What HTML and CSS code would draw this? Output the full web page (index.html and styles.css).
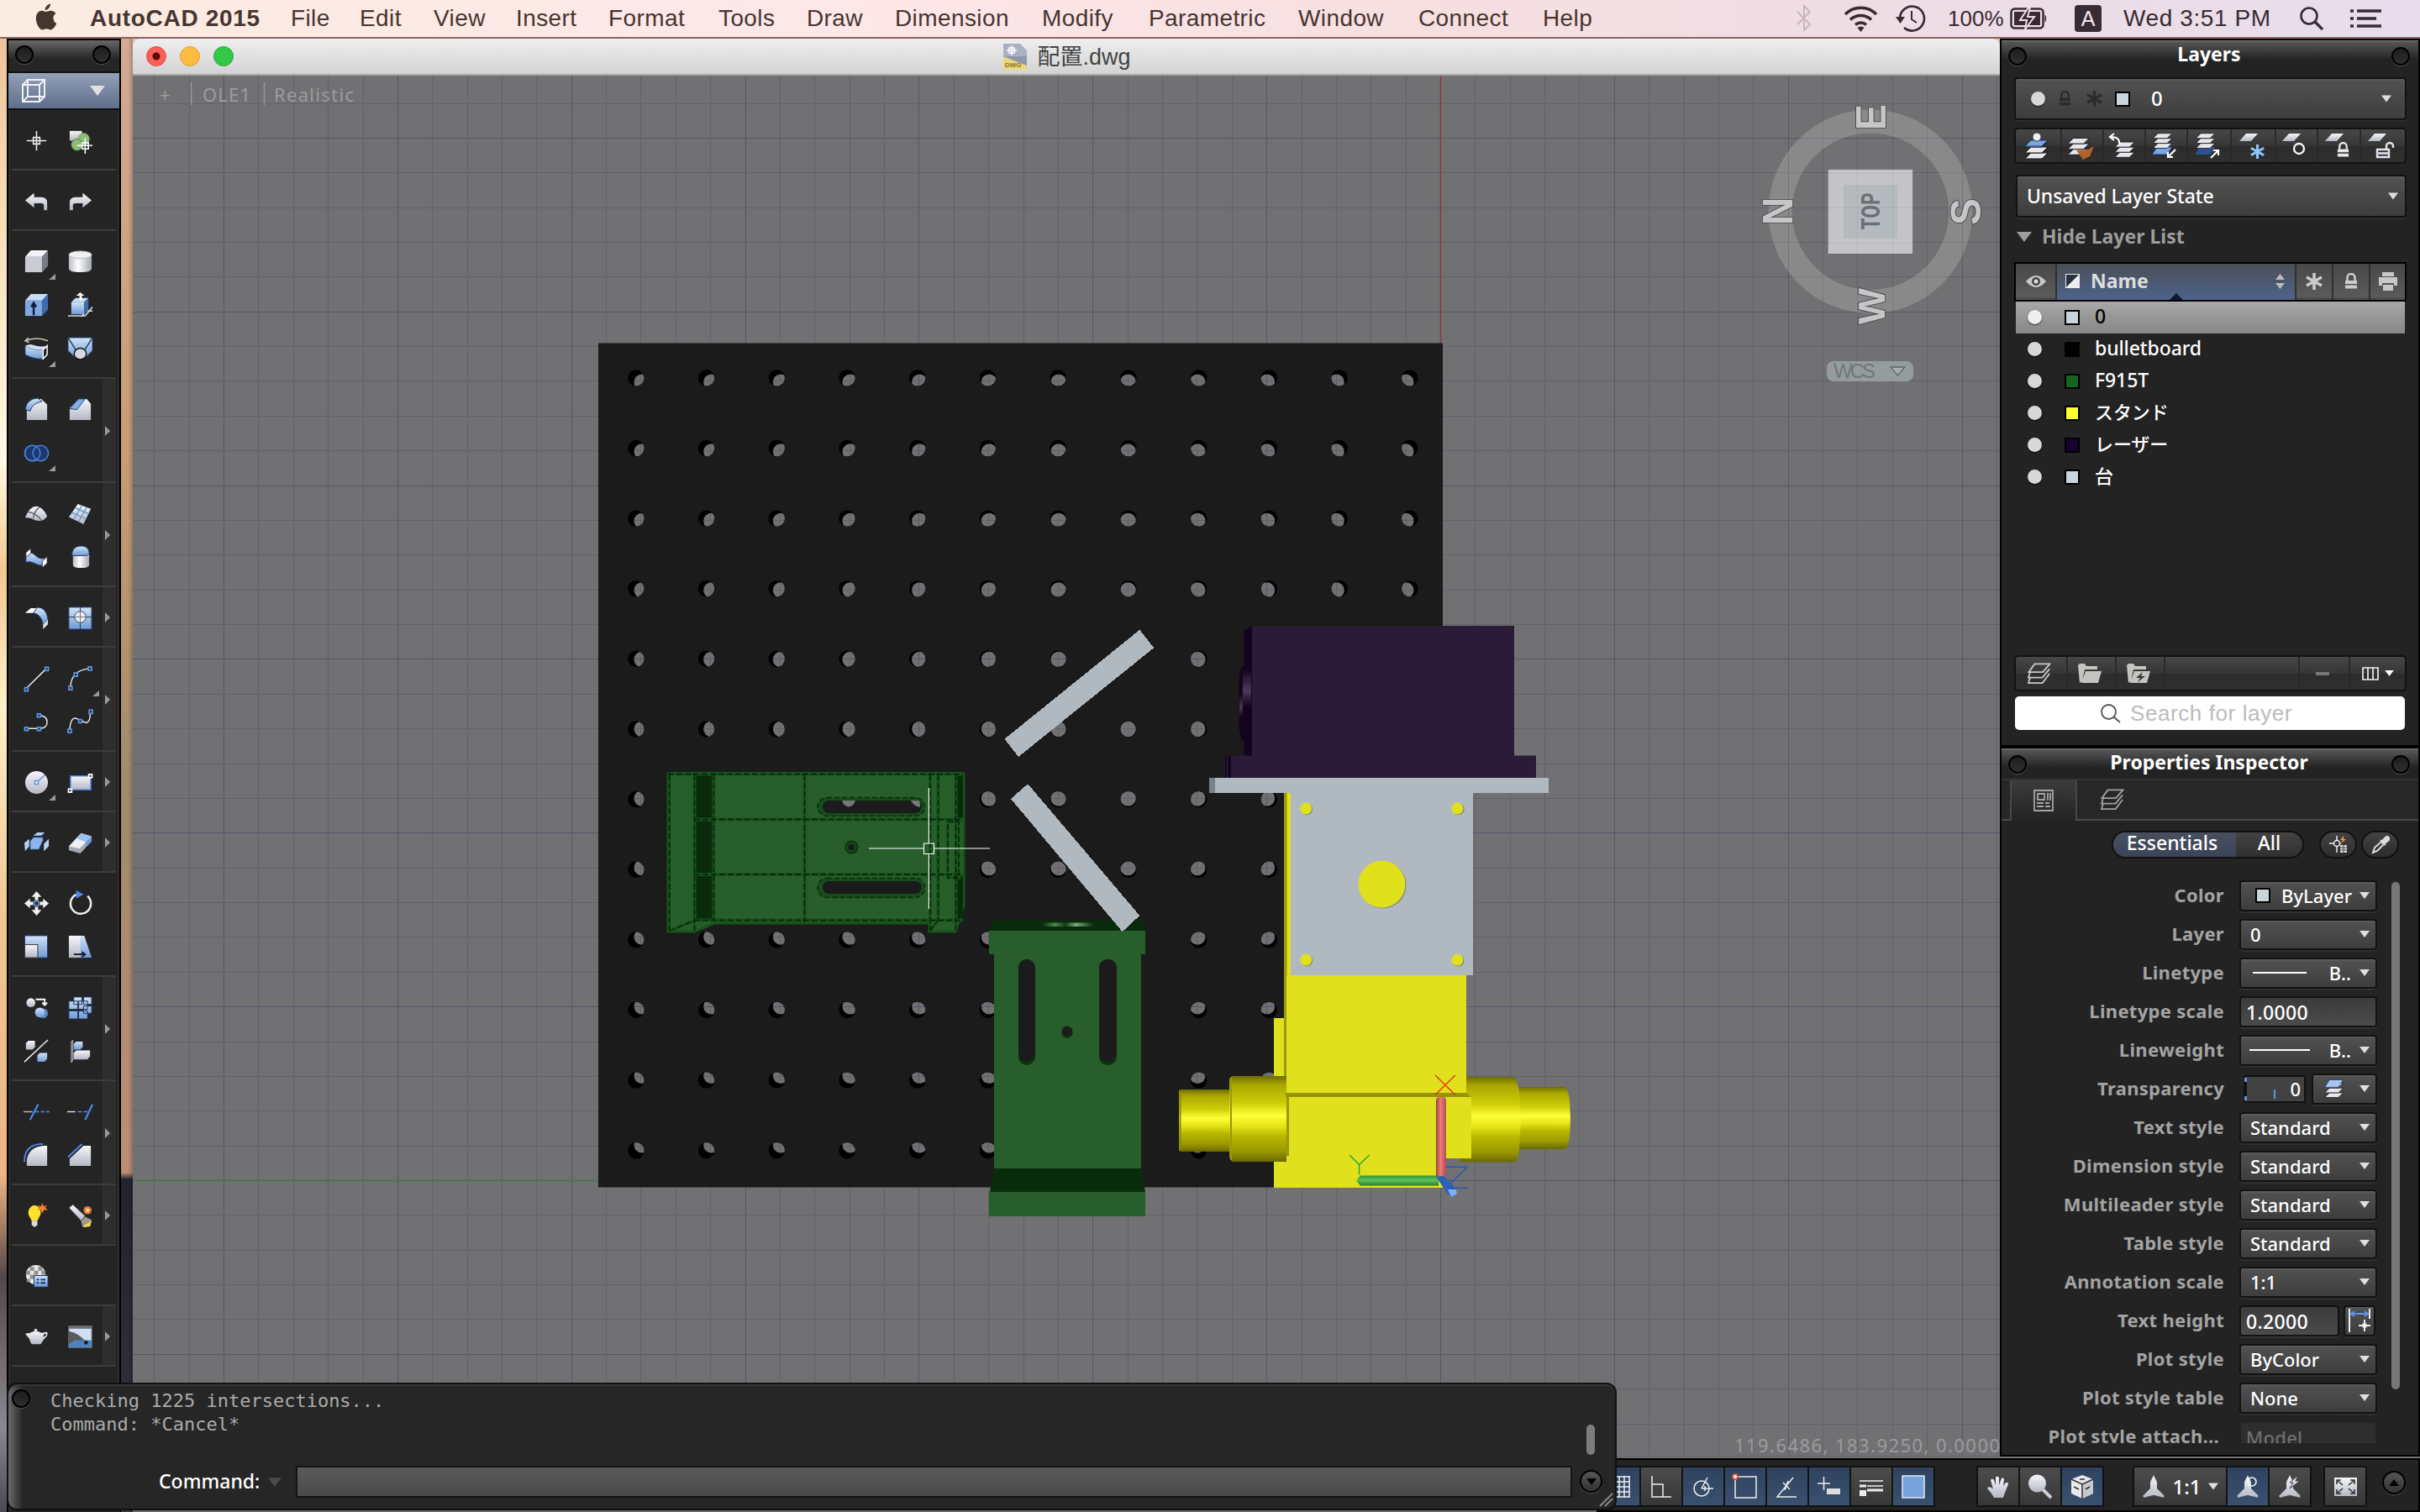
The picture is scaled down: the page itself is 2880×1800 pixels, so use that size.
FILE: index.html
```html
<!DOCTYPE html>
<html lang="en">
<head>
<meta charset="utf-8">
<title>AutoCAD 2015</title>
<link rel="stylesheet" href="styles.css">
</head>
<body>
<svg class="defs" width="0" height="0">
  <defs>
    <linearGradient id="gW" x1="0" y1="0" x2="0" y2="1"><stop offset="0" stop-color="#f6f7fa"/><stop offset="1" stop-color="#b4b8c4"/></linearGradient>
    <linearGradient id="gH" x1="0" y1="0" x2="1" y2="0"><stop offset="0" stop-color="#b9bcc4"/><stop offset=".4" stop-color="#fff"/><stop offset="1" stop-color="#a4a8b2"/></linearGradient>
    <linearGradient id="gB" x1="0" y1="0" x2="0" y2="1"><stop offset="0" stop-color="#d3e4f8"/><stop offset="1" stop-color="#6d9bd6"/></linearGradient>
    <linearGradient id="gC" x1="0" y1="0" x2="0" y2="1"><stop offset="0" stop-color="#6e6c00"/><stop offset=".1" stop-color="#a8a600"/><stop offset=".32" stop-color="#d0ce08"/><stop offset=".46" stop-color="#ffff38"/><stop offset=".58" stop-color="#e8e618"/><stop offset=".7" stop-color="#bbb900"/><stop offset=".88" stop-color="#9a9800"/><stop offset="1" stop-color="#6a6800"/></linearGradient>
    <linearGradient id="gK" x1="0" y1="0" x2="0" y2="1"><stop offset="0" stop-color="#140320"/><stop offset=".4" stop-color="#4b3959"/><stop offset=".7" stop-color="#140320"/></linearGradient>
    <linearGradient id="gR" x1="0" y1="0" x2="1" y2="0"><stop offset="0" stop-color="#9c4040"/><stop offset=".45" stop-color="#f07c7c"/><stop offset="1" stop-color="#b04c4c"/></linearGradient>
    <linearGradient id="gG" x1="0" y1="0" x2="0" y2="1"><stop offset="0" stop-color="#2f8f34"/><stop offset=".45" stop-color="#5cc45c"/><stop offset="1" stop-color="#2c7c2e"/></linearGradient>
    <linearGradient id="gS" x1="0" y1="0" x2="1" y2="0"><stop offset="0" stop-color="#082a0a"/><stop offset=".25" stop-color="#4f8752"/><stop offset=".45" stop-color="#123d15"/><stop offset=".65" stop-color="#7aa87c"/><stop offset="1" stop-color="#082a0a"/></linearGradient>
    <symbol id="tri" viewBox="0 0 12 8"><path d="M0 0H12L6 8Z" fill="currentColor"/></symbol>
    <symbol id="lock" viewBox="0 0 16 20"><path d="M3.500 9V5.500a4.500 4.500 0 0 1 9 0V9" fill="none" stroke="currentColor" stroke-width="2.500"/><path d="M1 9H15V13H1ZM1 14.500H15V18.500H1Z" fill="currentColor"/></symbol>
    <symbol id="star" viewBox="0 0 20 20"><path d="M10 0V20M1 5L19 15M1 15L19 5" stroke="currentColor" stroke-width="3.600"/></symbol>
    <symbol id="sheet" viewBox="0 0 24 12"><path d="M9 1H23L15 10H1Z" fill="url(#gW)"/></symbol>
    <symbol id="stack" viewBox="0 0 30 32"><path d="M8 22H28L21 29H1Z" fill="#e6e8ee" stroke="#1a1a1a"/><path d="M8 15H28L21 22H1Z" fill="#e6e8ee" stroke="#1a1a1a"/><path d="M8 8H28L21 15H1Z" fill="#e6e8ee" stroke="#1a1a1a"/></symbol>
    <symbol id="ostack" viewBox="0 0 30 28"><path d="M3 19L1 26H19L28 14M3 13L1 19H19L28 8" fill="none" stroke="currentColor" stroke-width="2"/><path d="M9 1.500H28.500L19.500 12H1.500Z" fill="none" stroke="currentColor" stroke-width="2"/></symbol>
    <symbol id="scale" viewBox="0 0 28 28"><path d="M14 0C15 3 18 7 18 9V16L27 25 25 27C21 25 17 25 14 24 11 25 7 25 3 27L1 25 10 16V9C10 7 13 3 14 0Z" fill="url(#gW)"/></symbol>
  </defs>
</svg>

<header class="menubar">
  <svg class="apple" viewBox="0 0 26 32"><path d="M18 0C18 4 15 7.500 11.500 7.500 11.500 4 14.500.5 18 0ZM21.500 17C21.500 13.500 24 11.800 24.500 11.500 22.500 8.600 19.500 8.300 18.500 8.300 16 8.100 14.500 9.600 13 9.600 11.500 9.600 10 8.300 7.700 8.300 4.500 8.400.8 11 .8 17.500.8 23.500 5 31 8.500 31 10.300 31 11 29.800 13.300 29.800 15.700 29.800 16.300 31 18.200 31 21.500 31 24.500 25.500 25.200 23.300 23.500 22.600 21.500 20.500 21.500 17Z" fill="#47352f"/></svg>
  <nav class="menus"><b>AutoCAD 2015</b><span>File</span><span>Edit</span><span>View</span><span>Insert</span><span>Format</span><span>Tools</span><span>Draw</span><span>Dimension</span><span>Modify</span><span>Parametric</span><span>Window</span><span>Connect</span><span>Help</span></nav>
  <div class="tray">
    <svg width="20" height="34" viewBox="0 0 20 34"><path d="M2 9L17 24 10 31V2L17 9 2 24" fill="none" stroke="#c9b6bd" stroke-width="2"/></svg>
    <svg class="m37" width="41" height="32" viewBox="0 0 41 32"><g fill="none" stroke="#3a2a32" stroke-width="3.600"><path d="M2 11A26 26 0 0 1 39 11"/><path d="M8 17.500A18 18 0 0 1 33 17.500"/><path d="M14 23.500A9.500 9.500 0 0 1 27 23.500"/></g><path d="M16.500 27A6 6 0 0 1 24.500 27L20.500 32Z" fill="#3a2a32"/></svg>
    <svg class="m21" width="36" height="34" viewBox="0 0 36 34"><path d="M5 17A14.500 14.500 0 1 1 10 28" fill="none" stroke="#3a2a32" stroke-width="2.600"/><path d="M0 15H11L5.500 23Z" fill="#3a2a32"/><path d="M19 8V18L25 22" fill="none" stroke="#3a2a32" stroke-width="2"/></svg>
    <span class="m26 pct">100%</span>
    <svg class="m10" width="45" height="26" viewBox="0 0 45 26"><rect x="1.500" y="1.500" width="38" height="23" rx="4" fill="none" stroke="#3a2a32" stroke-width="2.500"/><rect x="5" y="5" width="31" height="16" fill="#3a2a32"/><path d="M41.500 8Q45 13 41.500 18Z" fill="#3a2a32"/><path d="M22 0L12 15H20L18 26 29 11H21L24 0Z" fill="#3a2a32" stroke="#eedde4" stroke-width="2"/></svg>
    <span class="m32 ime">A</span>
    <span class="m26 date">Wed 3:51 PM</span>
    <svg class="m34" width="30" height="30" viewBox="0 0 30 30"><circle cx="12" cy="12" r="9.500" fill="none" stroke="#3a2a32" stroke-width="2.600"/><path d="M19 19L28 28" stroke="#3a2a32" stroke-width="3.200"/></svg>
    <svg class="m31" width="37" height="22" viewBox="0 0 37 22"><path d="M0 2H4M8 2H37M0 11H4M8 11H31M0 20H4M8 20H37" stroke="#3a2a32" stroke-width="3.600"/></svg>
  </div>
</header>

<div class="rock"></div>

<main class="drawing">
  <div class="titlebar">
    <i class="light red"></i><i class="light amber"></i><i class="light green"></i>
    <div class="doc"><svg width="28" height="31" viewBox="0 0 28 31"><path d="M0 0H20L28 8V31H0Z" fill="#a9b2c3"/><path d="M0 15L28 26V31H0Z" fill="#ecd77c"/><path d="M0 15L28 15V26Z" fill="#8f98aa"/><path d="M4 8H16M10 2V14M7 5H13V11H7Z" stroke="#fff" fill="none" stroke-width="1.500"/><text x="2" y="28" font-size="8" font-family="Liberation Sans" font-weight="bold" fill="#857229">DWG</text></svg><span>配置.dwg</span></div>
  </div>
  <svg class="canvas" viewBox="158 90 2222 1643">
    <defs><clipPath id="holeTop"></clipPath><clipPath id="holeBottom"></clipPath></defs>
    <g id="floor"><rect x="158" y="90" width="2222" height="1643" fill="#717173"/><g id="grid" shape-rendering="crispEdges"></g></g>
    <path d="M158 1405.500H712" stroke="#3f7a45" stroke-width="1.500"/><path d="M1714.500 90V408" stroke="#8b3a3f" stroke-width="1.500"/>
    <rect x="712" y="408.500" width="1005" height="1005" fill="#1b1b1b"/>
    <g id="rims" fill="#000"></g>
    <g clip-path="url(#holeTop)"><g clip-path="url(#holeBottom)"><use href="#floor"/></g></g>

    <path d="M794.500 920.500L802 919H1146L1148 921V1080L1138 1110H1106V1099.500H850L827 1110H794.500Z" fill="#285e2b"/>
    <path d="M795 921H1147V1078L1137 1109H1106V1099H850L826 1109H795Z" fill="none" stroke="#17551b" stroke-width="3"/>
    <g fill="#082c0b"><path d="M828 922H848V974H828ZM828 976H848V1040H828ZM828 1042H848V1094H828ZM1138 922H1146V974H1138ZM1138 1042H1146V1094H1138Z"/></g>
    <path d="M795 921.500H1146M826 975.500H1146M826 1041H1146M826 1095.500H1146M796.500 922V1108M826.500 922V1108M849.500 922V1096M957.500 922V1098M1107 922V1108M1116.500 922V1096M1137.500 922V1108M1128 978H1141V1045H1128ZM797 1108L826 1096M1107 1108L1116 1096" fill="none" stroke="#17551b" stroke-width="4"/>
    <path d="M795 921.500H1146M826 975.500H1146M826 1041H1146M826 1095.500H1146M796.500 922V1108M826.500 922V1108M849.500 922V1096M957.500 922V1098M1107 922V1108M1116.500 922V1096M1137.500 922V1108M1128 978H1141V1045H1128ZM797 1108L826 1096M1107 1108L1116 1096" fill="none" stroke="#061f08" stroke-width="1.300" stroke-dasharray="7 3"/>
    <g fill="#164d1a" stroke="#082c0b" stroke-dasharray="6 3" stroke-width="1.400"><rect x="973" y="949.500" width="127.500" height="22" rx="11"/><rect x="973" y="1045.500" width="127.500" height="23" rx="11"/></g>
    <g fill="#1b1b1b"><rect x="979" y="953" width="118" height="15" rx="7.500"/><rect x="979" y="1049" width="118" height="15" rx="7.500"/></g>
    <path d="M1002 953H1018Q1016 960 1010 960.500 1004 960 1002 953ZM1084 953H1094Q1096 960 1094 961 1087 959 1084 953Z" fill="#78787a"/>
    <circle cx="1013.400" cy="1008.600" r="7" fill="#174f1a" stroke="#0c3a10" stroke-width="2.500"/><circle cx="1013.400" cy="1008.600" r="4" fill="#1b1b1b"/>

    <path d="M1183 1095.500H1359L1363 1108H1177Z" fill="#082c0b"/><rect x="1240" y="1098.500" width="62" height="4.500" rx="2" fill="url(#gS)"/>
    <path d="M1177 1108H1363V1136H1358V1391H1183V1136H1177Z" fill="#285e2b"/>
    <path d="M1183 1391H1358L1363 1419H1178Z" fill="#082c0b"/><rect x="1177" y="1419" width="186" height="29" fill="#285e2b"/>
    <g fill="#0b330e"><rect x="1212" y="1142" width="20" height="126" rx="10"/><rect x="1308" y="1142" width="21" height="126" rx="10"/><circle cx="1270" cy="1229" r="6.800"/></g>
    <g fill="#1b1b1b"><rect x="1212" y="1142" width="20" height="121" rx="10"/><rect x="1308" y="1142" width="21" height="121" rx="10"/><circle cx="1270" cy="1227.500" r="6"/></g>
    <g fill="#b1b9c0" shape-rendering="crispEdges"><path d="M1356.300 749.800L1373.200 771.200 1212 901 1195.500 879.700Z"/><path d="M1223.200 933.200L1356.300 1090 1335.700 1109.200 1203 951Z"/></g>

    <path d="M1480.500 751L1490 745V925H1480.500Z" fill="#130520"/><path d="M1474.500 805L1478 793H1490V882H1478L1474.500 868Z" fill="#130520"/><path d="M1479 797H1489V860H1479Z" fill="url(#gK)"/><path d="M1475 826H1479V866H1475Z" fill="url(#gK)"/>
    <path d="M1490 745H1802V899.500H1828V926H1457.500V899.500H1490Z" fill="#2a1b36"/><path d="M1458 899.500H1465V926H1458Z" fill="#130520"/><path d="M1460.500 900V926" stroke="#3b2a48"/>
    <rect x="1528" y="944" width="8" height="218" fill="#e0e01c"/><rect x="1528" y="944" width="3.500" height="363" fill="#99980c"/>
    <rect x="1516" y="1212" width="12" height="70" fill="#e0e01c"/>
    <path d="M1516 1370H1717V1414H1516Z" fill="#e0e01c"/>
    <path d="M1403 1300Q1403 1297 1406 1297H1466V1371H1406Q1403 1371 1403 1366Z" fill="url(#gC)"/><path d="M1404.500 1298V1370" stroke="#8a8800" stroke-width="2"/>
    <path d="M1463 1284L1466 1281H1531V1383H1466L1463 1378Z" fill="url(#gC)"/><path d="M1465 1283V1381" stroke="#9a9810" stroke-width="2"/>
    <path d="M1808 1294H1862Q1866 1297 1868 1310L1869 1332 1868 1354Q1866 1366 1862 1368H1808Z" fill="url(#gC)"/>
    <path d="M1738 1282H1801Q1806 1286 1808 1300L1810 1333 1808 1370Q1806 1382 1802 1383.500H1738Z" fill="url(#gC)"/>
    <rect x="1531" y="1161" width="214" height="140" fill="#e0e01c"/>
    <path d="M1530 1301H1745L1751 1306H1530Z" fill="#969409"/>
    <path d="M1531 1306H1751V1379H1717V1395H1534V1376L1531 1374Z" fill="#e0e01c"/><path d="M1532.500 1306V1376" stroke="#99980c" stroke-width="3"/>
    <path d="M1439 926H1843V944H1439Z" fill="#b1b9c0"/><path d="M1439 926H1446V944H1439Z" fill="#79828a"/><rect x="1536" y="944" width="217" height="217" fill="#b1b9c0"/>
    <g fill="#77808a"><circle cx="1645.500" cy="1053.500" r="28"/><circle cx="1555" cy="963.300" r="7"/><circle cx="1735.500" cy="963.300" r="7"/><circle cx="1555" cy="1143.500" r="7"/><circle cx="1735.500" cy="1143.500" r="7"/></g>
    <g fill="#e0e01c"><circle cx="1644.500" cy="1052.700" r="28"/><circle cx="1554.200" cy="962.600" r="7"/><circle cx="1734.500" cy="962.600" r="7"/><circle cx="1554.200" cy="1142.800" r="7"/><circle cx="1734.500" cy="1142.800" r="7"/></g>

    <path d="M1709 1311Q1709 1306 1713 1306H1717Q1721 1306 1721 1311V1404H1709Z" fill="url(#gR)"/>
    <path d="M1614 1405.500L1619 1399.500H1712V1411.500H1619Z" fill="url(#gG)"/>
    <path d="M1709 1401L1718 1399.500 1733 1415 1734 1421 1727 1425 1722 1420Z" fill="#2b62b4"/><path d="M1723 1416L1733 1416 1734 1421 1727 1425Z" fill="#7fb0f0"/>
    <path d="M1708 1280L1732 1303.500M1732 1280L1708 1303.500" stroke="#e4341c" stroke-width="1.300"/>
    <path d="M1606 1375L1617.600 1386.500 1629.700 1375M1617.600 1386.500V1398.600" stroke="#22a83a" stroke-width="1.400" fill="none"/>
    <path d="M1721 1389.300H1746.700L1726 1409M1732 1414.300H1746.700" stroke="#2857b8" stroke-width="1.400" fill="none"/>
    <path d="M1034 1010H1099M1111.500 1010H1178M1105.400 938V1003.500M1105.400 1016.500V1082M1099.500 1004H1111.500V1016.500H1099.500Z" stroke="#fff" stroke-width="1.100" fill="none"/>

    <circle cx="2226" cy="251.700" r="107.300" fill="none" stroke="#fff" stroke-opacity=".17" stroke-width="28"/>
    <g class="compass"><text transform="translate(2243.500 139.500) rotate(-90)" textLength="31" lengthAdjust="spacingAndGlyphs">E</text><text transform="translate(2132.500 251.500) rotate(-90)" textLength="33" lengthAdjust="spacingAndGlyphs">N</text><text transform="translate(2356.500 252) rotate(-90)" textLength="32" lengthAdjust="spacingAndGlyphs">S</text><text transform="translate(2242.500 364.500) rotate(-90)" textLength="43" lengthAdjust="spacingAndGlyphs" font-size="45">W</text></g>
    <rect x="2175.700" y="202" width="100.400" height="100" fill="#c4c4c6"/><rect x="2194" y="220" width="64" height="64" fill="#b4babe"/>
    <path d="M2210.500 202V302M2252.500 202V302M2176 206.500H2276M2176 247.500H2276M2176 289.500H2276" stroke="#000" stroke-opacity=".06"/>
    <text class="face" transform="translate(2237 251.500) rotate(-90)" textLength="44" lengthAdjust="spacingAndGlyphs">TOP</text>
    <rect x="2174" y="430" width="103" height="24" rx="8" fill="#959c9e"/><text class="wcs" x="2182" y="450" textLength="50">WCS</text><path d="M2250 437H2267L2258.500 447Z" fill="#a7b0b3" stroke="#5f6567" stroke-width="1.300"/>
    <g class="hud"><text x="190" y="121">+</text><text x="241" y="121" textLength="57">OLE1</text><text x="326" y="121" textLength="95">Realistic</text><text x="2064" y="1729" textLength="316">119.6486, 183.9250, 0.0000</text></g>
    <path d="M227.500 98V125M314.500 98V125" stroke="#97979a" stroke-width="1.500"/>
  </svg>
</main>

<aside class="tools">
  <div class="tools-head"><i class="knob"></i><i class="knob"></i></div>
  <div class="mode"><svg width="30" height="30" viewBox="0 0 30 30"><path d="M2 8H22V28H2ZM8 2H28V22H8ZM2 8L8 2M22 8L28 2M22 28L28 22M2 28L8 22" fill="none" stroke="#eef2f8" stroke-width="2"/></svg><svg class="t" width="18" height="14"><use href="#tri" width="18" height="14"/></svg></div>
  <div class="sets">
    <section><div>
      <svg viewBox="0 0 32 32"><path d="M4 16H28M16 4V28M12 12H20V20H12Z" fill="none" stroke="#eee" stroke-width="1.600"/></svg>
      <svg viewBox="0 0 32 32"><rect x="3" y="4" width="15" height="12" fill="url(#gW)"/><circle cx="20" cy="14" r="7.500" fill="#8dba76"/><circle cx="12" cy="21" r="7" fill="#8dba76" stroke="#557c42"/><path d="M12 22H31M22 13V32M18.500 18.500H26V26H18.500Z" fill="none" stroke="#fff" stroke-width="1.600"/></svg>
    </div></section>
    <section><div>
      <svg viewBox="0 0 32 32"><path d="M2 15L13 6V11H22Q29 11 29 18V27H25V21Q25 18.500 21 18.500H13V24Z" fill="url(#gW)"/></svg>
      <svg viewBox="0 0 32 32"><path d="M30 15L19 6V11H10Q3 11 3 18V27H7V21Q7 18.500 11 18.500H19V24Z" fill="url(#gW)"/></svg>
    </div></section>
    <section class="flyout"><div>
      <svg viewBox="0 0 32 32"><path d="M2 10H23V29H2Z" fill="#c9ccd4"/><path d="M2 10L9 2H30L23 10Z" fill="#f3f4f7"/><path d="M23 10L30 2V21L23 29Z" fill="#767c88"/></svg>
      <svg viewBox="0 0 32 32"><path d="M2 8V24Q2 29 16 29T30 24V8Z" fill="url(#gH)"/><ellipse cx="16" cy="7.500" rx="14" ry="4.500" fill="#eef0f4" stroke="#bbb"/></svg>
      <svg viewBox="0 0 32 32"><path d="M2 10H23V29H2Z" fill="#7fa8df"/><path d="M2 10L9 2H30L23 10Z" fill="#c6dbf6"/><path d="M23 10L30 2V21L23 29Z" fill="#3f6cae"/><path d="M12.500 28V15M9.500 18L12.500 13 15.500 18" fill="none" stroke="#10203c" stroke-width="2.600"/></svg>
      <svg viewBox="0 0 32 32"><path d="M5 12H21V27H5Z" fill="url(#gB)"/><path d="M5 12L10 7H26L21 12Z" fill="#c6dbf6"/><path d="M21 12L26 7V22L21 27Z" fill="#3f6cae"/><path d="M15 10V4H11L16 0 21 4H18V10Z" fill="#fff"/><path d="M1 29H22L31 18M17 30L21 26M25 23H31" stroke="#ddd" fill="none" stroke-width="1.600"/></svg>
      <svg viewBox="0 0 32 32"><path d="M2 6Q16 0 30 6M6 2L2 6 7 8" fill="none" stroke="#c9c4b8" stroke-width="1.600"/><path d="M2 12Q13 18 24 17V28Q13 29 2 23Z" fill="url(#gB)" stroke="#223b66"/><path d="M2 12Q8 9 12 11 20 14 29 12L24 17Q13 18 2 12Z" fill="#cfe0f6"/><path d="M24 17L29 12V23L24 28Z" fill="#222" stroke="#fff" stroke-width="1.500"/></svg>
      <svg viewBox="0 0 32 32"><path d="M1 2H31V18L22 27H10L1 18Z" fill="url(#gB)" stroke="#223b66"/><path d="M1 2L11 18M31 2L21 18" stroke="#223b66" stroke-width="1.500"/><ellipse cx="16" cy="22" rx="7.500" ry="7" fill="#d5d8df" stroke="#111" stroke-width="1.500"/></svg>
    </div></section>
    <section class="more flyout"><div>
      <svg viewBox="0 0 32 32"><path d="M4 14V29H29V10L22 3H14Z" fill="url(#gW)"/><path d="M2 16Q4 3 17 2L23 6Q11 8 8 18Z" fill="url(#gB)" stroke="#223b66"/></svg>
      <svg viewBox="0 0 32 32"><path d="M3 14L14 3H24L29 9V29H3Z" fill="url(#gW)"/><path d="M3 15L14 3H22L12 16Z" fill="#84b0ea" stroke="#223b66"/></svg>
      <svg viewBox="0 0 32 32"><g fill="#1c386e" stroke="#4a80d8" stroke-width="1.600"><circle cx="11" cy="16" r="9.500"/><circle cx="21" cy="16" r="9.500"/><circle cx="11" cy="16" r="9.500" fill="none"/></g></svg>
    </div></section>
    <section class="more"><div>
      <svg viewBox="0 0 32 32"><path d="M2 21Q7 7 16 7 24 8 29 19 24 27 14 24 8 20 2 21Z" fill="url(#gW)"/><path d="M5 14Q14 14 22 24M20 8Q13 12 12 22" fill="none" stroke="#555" stroke-width="1.200"/></svg>
      <svg viewBox="0 0 32 32"><path d="M13 4L29 10 20 29 2 20Z" fill="url(#gW)"/><path d="M18 6L8 23M24 8L14 26M10 9L26 16M6 15L23 22" stroke="#6d9bd6" stroke-width="1.500"/></svg>
      <svg viewBox="0 0 32 32"><path d="M3 12Q9 8 15 14T29 16V24Q22 28 15 24T3 22Z" fill="url(#gB)" stroke="#223b66"/><path d="M3 10L9 5V11L3 16ZM23 21L29 15V23L23 29Z" fill="#fff" stroke="#333"/></svg>
      <svg viewBox="0 0 32 32"><path d="M7 12V25Q7 29 17 29T27 25V12Z" fill="url(#gH)"/><path d="M6 10Q8 2 17 2T27 10Q27 14 20 14T6 14Z" fill="url(#gB)" stroke="#223b66"/></svg>
    </div></section>
    <section class="more"><div>
      <svg viewBox="0 0 32 32"><path d="M2 10L9 4H17L12 10Z" fill="#fff"/><path d="M12 10L17 3Q28 3 30 18L24 24Q22 12 12 10Z" fill="url(#gB)" stroke="#223b66"/><path d="M24 24L30 18V24L24 30Z" fill="#ddd"/></svg>
      <svg viewBox="0 0 32 32"><rect x="2" y="3" width="28" height="27" fill="url(#gB)" stroke="#223b66"/><path d="M2 15H30M16 3V30" stroke="#223b66"/><circle cx="16" cy="15" r="7" fill="#e8eefa" stroke="#444"/><path d="M9 15H23M16 8V22" stroke="#777"/></svg>
    </div></section>
    <section class="more flyout arc"><div>
      <svg viewBox="0 0 32 32"><path d="M3 29L28 4" stroke="#e8e8e8" stroke-width="1.500"/><path d="M1.500 27.500h4v4h-4zM26.500 2.500h4v4h-4z" fill="#222" stroke="#5d94e8" stroke-width="1.800"/></svg>
      <svg viewBox="0 0 32 32"><path d="M4 28Q4 6 28 4" fill="none" stroke="#e8e8e8" stroke-width="1.500"/><path d="M2 26h4v4h-4zM8.500 9.500h4v4h-4zM26 2h4v4h-4z" fill="#222" stroke="#5d94e8" stroke-width="1.800"/></svg>
      <svg viewBox="0 0 32 32"><path d="M3 24H19Q29 24 29 16T18 8" fill="none" stroke="#e8e8e8" stroke-width="1.500"/><path d="M1.500 22.500h4v4h-4zM17 22.500h4v4h-4zM17 6h4v4h-4z" fill="#222" stroke="#5d94e8" stroke-width="1.800"/></svg>
      <svg viewBox="0 0 32 32"><path d="M3 27Q4 8 12 12T24 17Q29 14 28 4" fill="none" stroke="#e8e8e8" stroke-width="1.500"/><path d="M1 25h4v4h-4zM14 13h4v4h-4zM27 1.500h4v4h-4z" fill="#222" stroke="#5d94e8" stroke-width="1.800"/></svg>
    </div></section>
    <section class="more flyout"><div>
      <svg viewBox="0 0 32 32"><circle cx="16" cy="16" r="14" fill="url(#gW)"/><path d="M16 16L26 7" stroke="#5d94e8" stroke-width="1.600"/><path d="M14 14h4v4h-4z" fill="#fff" stroke="#5d94e8" stroke-width="1.600"/></svg>
      <svg viewBox="0 0 32 32"><rect x="4" y="8" width="25" height="17" fill="url(#gW)" stroke="#4a80d8" stroke-width="1.500"/><path d="M1.500 24h4v4h-4zM26.500 6h4v4h-4z" fill="#333" stroke="#fff" stroke-width="1.800"/></svg>
    </div></section>
    <section class="more"><div>
      <svg viewBox="0 0 32 32"><path d="M8 14L12 9H24V13L19 24H8Z" fill="#8bb4ea" stroke="#223b66"/><path d="M1 16L7 11V20L2 26ZM25 17L31 11V20L25 26ZM12 7L17 3H26L22 7Z" fill="#b4d0f4"/></svg>
      <svg viewBox="0 0 32 32"><path d="M2 20L17 4 30 8V14L16 29 2 25Z" fill="#a3a8b3"/><path d="M2 20L17 4 30 8 15 23Z" fill="#eef0f4"/><path d="M11 10L17 4 30 8 23 15Z" fill="#9bc0ee"/><path d="M23 15L30 8V14L23 21Z" fill="#6d9bd6"/></svg>
    </div></section>
    <section><div>
      <svg viewBox="0 0 32 32"><path d="M16 1L22 8H18V12H14V8H10ZM16 31L22 24H18V20H14V24H10ZM1 16L8 10V14H12V18H8V22ZM31 16L24 10V14H20V18H24V22Z" fill="#f0f0f0"/><rect x="13.500" y="13.500" width="5" height="5" fill="#222" stroke="#5d94e8" stroke-width="1.600"/></svg>
      <svg viewBox="0 0 32 32"><path d="M11 5A12.500 12.500 0 1 0 25 7" fill="none" stroke="#eee" stroke-width="2.600"/><path d="M11 0L20 5 11 10Z" fill="#4a8af0"/></svg>
      <svg viewBox="0 0 32 32"><rect x="1.500" y="2" width="28" height="27" fill="url(#gB)" stroke="#223b66"/><rect x="1.500" y="13" width="16" height="16" fill="url(#gW)" stroke="#333"/></svg>
      <svg viewBox="0 0 32 32"><path d="M2 2H17V29H2Z" fill="url(#gW)"/><path d="M16 2H21L30 29H16Z" fill="url(#gB)"/><path d="M8 25H20M18 22L22 25 18 28" fill="none" stroke="#111" stroke-width="1.800"/></svg>
    </div></section>
    <section class="more"><div>
      <svg viewBox="0 0 32 32"><circle cx="9" cy="10" r="5.500" fill="url(#gW)"/><circle cx="24" cy="23" r="6" fill="#5c87c8"/><circle cx="20" cy="22" r="6" fill="url(#gB)"/><path d="M15 6H26V12M23 10L26 13 29 10" fill="none" stroke="#fff" stroke-width="2"/></svg>
      <svg viewBox="0 0 32 32"><g fill="url(#gB)" stroke="#1d3357"><path d="M8 3H18V12H8ZM20 3H30V12H20ZM20 14H30V23H20ZM2 8H13V18H2ZM14 8H25V18H14ZM2 20H13V30H2ZM14 20H25V30H14Z"/></g></svg>
      <svg viewBox="0 0 32 32"><path d="M3 6L6 3H14V11L11 14H3Z" fill="url(#gW)"/><path d="M17 21L20 18H29V25L26 29H17Z" fill="url(#gB)"/><path d="M1 29L30 2" stroke="#eee" stroke-width="1.500"/></svg>
      <svg viewBox="0 0 32 32"><path d="M5 4L7 2V27L5 30Z" fill="#6b7684" stroke="#aaa"/><path d="M8 7L11 4H19V11L16 14H8Z" fill="url(#gB)"/><path d="M8 18L11 15H28V22L25 26H8Z" fill="url(#gW)"/></svg>
    </div></section>
    <section class="more"><div>
      <svg viewBox="0 0 32 32"><path d="M0 16H11" stroke="#bbb" stroke-width="1.500"/><path d="M8 26L18 7" stroke="#4a8af0" stroke-width="2.200"/><path d="M14 16H32" stroke="#4a8af0" stroke-width="1.500" stroke-dasharray="5 2"/></svg>
      <svg viewBox="0 0 32 32"><path d="M0 16H10" stroke="#ddd" stroke-width="1.500"/><path d="M22 26L31 7" stroke="#4a8af0" stroke-width="2.200"/><path d="M13 16H25" stroke="#4a8af0" stroke-width="1.500" stroke-dasharray="5 2"/></svg>
      <svg viewBox="0 0 32 32"><path d="M4 29V22Q6 6 24 4H29V29Z" fill="url(#gW)"/><path d="M1 24Q1 2 24 2" fill="none" stroke="#4a8af0" stroke-width="1.800"/></svg>
      <svg viewBox="0 0 32 32"><path d="M3 29V20L20 4H29V29Z" fill="url(#gW)"/><path d="M1 18L18 2" stroke="#4a8af0" stroke-width="2"/></svg>
    </div></section>
    <section class="more"><div>
      <svg viewBox="0 0 32 32"><path d="M13 3A8 9 0 0 1 19 18L17 22H10L8 18A8 9 0 0 1 13 3Z" fill="#ffe02a"/><path d="M10 22H17V27L13.500 30 10 27Z" fill="#ddd"/><path d="M23 0L24.500 4 29 3 26.500 6 30 9 25 8.500 23 13 21 8.500 16 9 19.500 6 17 3 21.500 4Z" fill="#f0862c"/></svg>
      <svg viewBox="0 0 32 32"><path d="M2 6L7 2 22 16 17 22Z" fill="url(#gW)" stroke="#444"/><path d="M17 22L22 17 30 21 28 29 19 30Z" fill="#9a9a92"/><path d="M20 28L30 22 28 29 21 30Z" fill="#f2d640"/><circle cx="25" cy="9" r="5" fill="#e8792a"/><circle cx="25" cy="9" r="2" fill="#fff6c8"/></svg>
    </div></section>
    <section><div>
      <svg viewBox="0 0 32 32"><circle cx="15" cy="14" r="12" fill="#e6e6e6"/><path d="M8 4h5v5h-5zM18 4h5v5h-5zM3 9h5v5h-5zM13 9h5v5h-5zM22 9h5v5h-5zM8 14h5v5h-5zM4 19h4v4h-4z" fill="#8e8e8e"/><rect x="13" y="15" width="17" height="14" fill="url(#gB)" stroke="#16366c"/><path d="M16 20h3M21 20h6M16 24h3M21 24h6" stroke="#16366c" stroke-width="2"/></svg>
    </div></section>
    <section class="more"><div>
      <svg viewBox="0 0 32 32"><path d="M2 12L8 11Q15 7 22 11L29 10Q31 14 25 19L21 25H10Q8 22 7 18ZM25 13L24 16Q28 15 28 12Z" fill="url(#gW)" fill-rule="evenodd"/><circle cx="15" cy="8" r="2" fill="#ddd"/></svg>
      <svg viewBox="0 0 32 32"><rect x="2" y="3" width="28" height="26" fill="#cfe0f2" stroke="#888"/><path d="M2 3H30V6H2Z" fill="#6d7177"/><path d="M2 9Q15 12 22 21L2 29Z" fill="#565c60"/><path d="M9 20H30V29H2V25Z" fill="#4f83c0"/><circle cx="23" cy="23" r="2.500" fill="#222"/></svg>
    </div></section>
  </div>
</aside>

<aside class="panel layers">
  <div class="bar"><i class="knob"></i><b>Layers</b><i class="knob"></i></div>
  <div class="drop big current"><i class="dot"></i><svg class="dim" width="15" height="19"><use href="#lock"/></svg><svg class="dim" width="19" height="19"><use href="#star"/></svg><i class="sw gray"></i><span>0</span><svg class="t" width="12" height="9"><use href="#tri"/></svg></div>
  <div class="strip">
    <span><svg width="30" height="34" viewBox="0 0 30 34"><use href="#stack" y="3" width="30" height="32"/><path d="M8 10H28L21 17H1Z" fill="#7ba6e4" stroke="#1b3767"/><circle cx="15" cy="6" r="5" fill="#eee" stroke="#444"/></svg></span>
    <span><svg width="34" height="34" viewBox="0 0 34 34"><use href="#stack" width="30" height="30"/><path d="M12 22L26 21 33 17 28 29 20 33Z" fill="#b3632a"/></svg></span>
    <span><svg width="34" height="34" viewBox="0 0 34 34"><use href="#stack" x="7" y="4" width="26" height="30"/><path d="M13 14Q14 6 3 6M7 2L2 6 7 10" fill="none" stroke="#fff" stroke-width="2.200"/></svg></span>
    <span><svg width="34" height="34" viewBox="0 0 34 34"><path d="M8 18H26L20 27H2Z" fill="#7ba6e4" stroke="#1b3767"/><use href="#stack" y="-5" width="30" height="27"/><path d="M30 21L21 30M21 24V30H27" fill="none" stroke="#fff" stroke-width="2.200"/></svg></span>
    <span><svg width="34" height="34" viewBox="0 0 34 34"><path d="M8 18H26L20 27H2Z" fill="#2c5290"/><use href="#stack" y="-5" width="30" height="27"/><path d="M21 31L30 22M24 22H30V28" fill="none" stroke="#fff" stroke-width="2.200"/></svg></span>
    <span><svg width="32" height="34" viewBox="0 0 32 34"><use href="#sheet" y="1" width="24" height="12"/><svg x="14" y="15" width="17" height="17" color="#8cc4ff"><use href="#star"/></svg></svg></span>
    <span><svg width="32" height="34" viewBox="0 0 32 34"><use href="#sheet" y="1" width="24" height="12"/><circle cx="21" cy="20" r="6" fill="none" stroke="#f4f4f4" stroke-width="2.400"/></svg></span>
    <span><svg width="32" height="34" viewBox="0 0 32 34"><use href="#sheet" y="1" width="24" height="12"/><svg x="15" y="12" width="15" height="19" color="#e8e8ec"><use href="#lock"/></svg></svg></span>
    <span><svg width="34" height="34" viewBox="0 0 34 34"><use href="#sheet" y="1" width="24" height="12"/><path d="M12 21H26V30H12ZM23 21V17A4 4 0 0 1 31 17V19" fill="none" stroke="#e8e8ec" stroke-width="2.400"/><path d="M12 24H26V27H12Z" fill="#ccd"/></svg></span>
  </div>
  <div class="drop big state"><span>Unsaved Layer State</span><svg class="t" width="12" height="9"><use href="#tri"/></svg></div>
  <div class="toggle"><svg width="18" height="14"><use href="#tri" width="18" height="14"/></svg><b>Hide Layer List</b></div>
  <div class="table">
    <div class="thead">
      <span><svg width="26" height="16" viewBox="0 0 26 16"><path d="M1 8Q13-6 25 8 13 22 1 8Z" fill="#c8c8c8"/><circle cx="13" cy="8" r="5" fill="#444"/><circle cx="13" cy="8" r="2.500" fill="#ddd"/></svg></span>
      <span class="name"><svg width="17" height="17" viewBox="0 0 17 17"><rect x="1" y="1" width="15" height="15" fill="none" stroke="#eee" stroke-width="2"/><path d="M2 15L15 2V15Z" fill="#8a8f99"/><path d="M1 16L16 1H1Z" fill="#2a3040"/><path d="M2 15L15 2V15Z" fill="#eee"/></svg><b>Name</b><svg class="sort" width="11" height="18" viewBox="0 0 11 18"><path d="M0 7L5.500 0 11 7ZM0 11H11L5.500 18Z" fill="#bbb"/></svg><svg class="notch" width="16" height="8"><path d="M0 8L8 0 16 8Z" fill="#111a2c"/></svg></span>
      <span><svg width="20" height="20" color="#ccc"><use href="#star"/></svg></span><span><svg width="16" height="20" color="#ccc"><use href="#lock"/></svg></span>
      <span><svg width="22" height="22" viewBox="0 0 22 22"><path d="M4 0H18V5H4ZM0 6H22V16H18V13H4V16H0ZM5 15H17V22H5Z" fill="#c8c8c8"/></svg></span>
    </div>
    <div class="lrow on"><i class="dot"></i><i class="sw gray"></i><span>0</span></div>
    <div class="lrow"><i class="dot"></i><i class="sw black"></i><span>bulletboard</span></div>
    <div class="lrow"><i class="dot"></i><i class="sw green"></i><span>F915T</span></div>
    <div class="lrow"><i class="dot"></i><i class="sw yellow"></i><span class="ja">スタンド</span></div>
    <div class="lrow"><i class="dot"></i><i class="sw purple"></i><span class="ja">レーザー</span></div>
    <div class="lrow"><i class="dot"></i><i class="sw gray"></i><span class="ja">台</span></div>
  </div>
  <div class="strip foot">
    <span><svg width="28" height="26" color="#c8c8c8"><use href="#ostack"/></svg></span>
    <span><svg width="30" height="25" viewBox="0 0 30 25"><path d="M1 3L3 1H9L11 4H24V8H9L6 22 3 24ZM10 10H29L25 24H5Z" fill="#c4c4c0"/></svg></span>
    <span><svg width="30" height="25" viewBox="0 0 30 25"><path d="M1 3L3 1H9L11 4H24V8H9L6 22 3 24ZM10 10H29L25 24H5Z" fill="#c4c4c0"/><path d="M20 11L12 18H17L14 23 23 16H18Z" fill="#333"/></svg></span>
    <span></span><span><i class="minus"></i></span>
    <span><svg width="20" height="16" viewBox="0 0 20 16"><path d="M1 1H19V15H1ZM7 1V15M13 1V15" fill="none" stroke="#eee" stroke-width="1.700"/></svg><svg class="t" width="11" height="7"><use href="#tri"/></svg></span>
  </div>
  <div class="search"><svg width="24" height="23" viewBox="0 0 24 23"><circle cx="9.500" cy="9.500" r="8.500" fill="none" stroke="#555" stroke-width="1.800"/><path d="M15.500 15.500L23 22" stroke="#555" stroke-width="2"/></svg><span>Search for layer</span></div>
</aside>

<aside class="panel props">
  <div class="bar"><i class="knob"></i><b>Properties Inspector</b><i class="knob"></i></div>
  <div class="tabs"><span class="tab"><svg width="24" height="26" viewBox="0 0 24 26"><path d="M1 1H23V25H1ZM5 5H13V12H5ZM17 4V13M20 4V13M4 16H12M4 20H12M14 16H19M14 20H20" fill="none" stroke="#a4a4a4" stroke-width="1.800"/></svg></span><span class="tab2"><svg width="30" height="26" color="#a0a0a0"><use href="#ostack"/></svg></span></div>
  <div class="filter">
    <span class="seg"><b class="on">Essentials</b><b>All</b></span>
    <span class="round"><svg width="22" height="22" viewBox="0 0 22 22"><path d="M0 9H5M9 0V5M9 13V20M12 9H14" stroke="#eee" stroke-width="1.500"/><circle cx="9" cy="9" r="3.500" fill="none" stroke="#eee" stroke-width="1.500"/><path d="M17 0L13 5H16L14 9 20 4H17Z" fill="#f0a030"/><path d="M13 11H21V20H13Z" fill="#ddd"/><path d="M13 14H21M13 17H21M17 11V20" stroke="#444"/></svg></span>
    <span class="round"><svg width="22" height="22" viewBox="0 0 22 22"><path d="M2 20L4 14 12 7 15 10 7 18Z" fill="none" stroke="#ddd" stroke-width="2"/><path d="M11 5L17 11M13 6L18 1Q22 1 21 5L16 9Z" fill="#ddd" stroke="#ddd" stroke-width="2"/></svg></span>
  </div>
  <div class="rows">
    <div class="row"><label>Color</label><div class="drop col"><i class="sw gray"></i><span>ByLayer</span><svg class="t" width="12" height="8"><use href="#tri"/></svg></div></div>
    <div class="row"><label>Layer</label><div class="drop"><span>0</span><svg class="t" width="12" height="8"><use href="#tri"/></svg></div></div>
    <div class="row"><label>Linetype</label><div class="drop"><i class="ln"></i><span>B..</span><svg class="t" width="12" height="8"><use href="#tri"/></svg></div></div>
    <div class="row"><label>Linetype scale</label><div class="drop input"><span>1.0000</span></div></div>
    <div class="row"><label>Lineweight</label><div class="drop"><i class="ln wide"></i><span>B..</span><svg class="t" width="12" height="8"><use href="#tri"/></svg></div></div>
    <div class="row"><label>Transparency</label><div class="slider"><i></i><span>0</span></div><div class="drop lay"><svg width="26" height="26" viewBox="0 0 30 32"><use href="#stack"/><path d="M8 3H28L21 14H1Z" fill="#a9c6f2" stroke="#1b3767"/></svg><svg class="t" width="12" height="8"><use href="#tri"/></svg></div></div>
    <div class="row"><label>Text style</label><div class="drop"><span>Standard</span><svg class="t" width="12" height="8"><use href="#tri"/></svg></div></div>
    <div class="row"><label>Dimension style</label><div class="drop"><span>Standard</span><svg class="t" width="12" height="8"><use href="#tri"/></svg></div></div>
    <div class="row"><label>Multileader style</label><div class="drop"><span>Standard</span><svg class="t" width="12" height="8"><use href="#tri"/></svg></div></div>
    <div class="row"><label>Table style</label><div class="drop"><span>Standard</span><svg class="t" width="12" height="8"><use href="#tri"/></svg></div></div>
    <div class="row"><label>Annotation scale</label><div class="drop"><span>1:1</span><svg class="t" width="12" height="8"><use href="#tri"/></svg></div></div>
    <div class="row"><label>Text height</label><div class="drop input short"><span>0.2000</span></div><div class="drop pick"><svg width="28" height="30" viewBox="0 0 28 30"><path d="M2 1V29M26 1V13" stroke="#eee" stroke-width="2"/><path d="M4 7H24M8 4L4 7 8 10M20 4L24 7 20 10" fill="none" stroke="#5d94e8" stroke-width="2"/><path d="M20 14V28M13 21H27" stroke="#eee" stroke-width="2"/><path d="M17.500 18.500H22.500V23.500H17.500Z" fill="#eee"/></svg></div></div>
    <div class="row"><label>Plot style</label><div class="drop"><span>ByColor</span><svg class="t" width="12" height="8"><use href="#tri"/></svg></div></div>
    <div class="row"><label>Plot style table</label><div class="drop"><span>None</span><svg class="t" width="12" height="8"><use href="#tri"/></svg></div></div>
    <div class="row"><label class="cut">Plot style attach...</label><div class="drop input off"><span>Model</span></div></div>
    <i class="thumb"></i>
  </div>
</aside>

<footer class="status">
  <div class="btns g1">
    <span class="on"><svg width="30" height="30" viewBox="0 0 30 30"><path d="M2 3H28M2 9H28M2 15H28M2 21H28M2 27H28M3 2V28M9 2V28M15 2V28M21 2V28M27 2V28" stroke="#eee" stroke-width="1.500"/></svg></span>
    <span><svg width="30" height="30" viewBox="0 0 30 30"><path d="M4 2V27H27M4 12H17V27" fill="none" stroke="#eee" stroke-width="1.500"/></svg></span>
    <span class="on"><svg width="30" height="30" viewBox="0 0 30 30"><circle cx="13" cy="17" r="9" fill="none" stroke="#eee" stroke-width="1.500"/><path d="M13 17H27M13 17L20 4M17 14V20" stroke="#eee" stroke-width="1.500"/></svg></span>
    <span class="on"><svg width="32" height="32" viewBox="0 0 32 32"><path d="M4 4H29V29H4Z" fill="none" stroke="#eee" stroke-width="1.500"/><circle cx="4" cy="4" r="3" fill="#fff" stroke="#e05038" stroke-width="1.800"/></svg></span>
    <span class="on"><svg width="30" height="30" viewBox="0 0 30 30"><path d="M26 27H3L22 4M10 10L18 18M12 19L16 8" fill="none" stroke="#eee" stroke-width="1.500"/></svg></span>
    <span class="on"><svg width="30" height="30" viewBox="0 0 30 30"><path d="M1 11H16M8.500 3V19" stroke="#eee" stroke-width="1.500"/><rect x="12" y="17" width="16" height="7" fill="#ddd"/></svg></span>
    <span><svg width="30" height="30" viewBox="0 0 30 30"><path d="M1 8H29M10 14H29" stroke="#eee" stroke-width="1.500"/><path d="M1 14H9M10 19H29" stroke="#eee" stroke-width="3"/><path d="M1 19H9V26H1Z" fill="#eee"/></svg></span>
    <span class="on"><svg width="30" height="30" viewBox="0 0 30 30"><rect x="2" y="2" width="26" height="26" fill="#79a3dc" stroke="#dfe9f8" stroke-width="1.500"/></svg></span>
  </div>
  <div class="btns g2">
    <span><svg width="28" height="28" viewBox="0 0 28 28"><path d="M9 27Q6 21 1 16 2 13 6 15L8 17 5 6Q7 3 9 6L11 12 11 3Q13 0 15 3V12L18 4Q20 2 21 5L20 13 23 9Q26 8 26 11L22 21 20 27Z" fill="url(#gW)"/></svg></span>
    <span><svg width="32" height="32" viewBox="0 0 32 32"><path d="M18 18L29 29" stroke="#d0d0d0" stroke-width="4"/><circle cx="12.500" cy="12" r="10.500" fill="url(#gW)"/></svg></span>
    <span class="on"><svg width="30" height="30" viewBox="0 0 30 30"><path d="M15 1L28 6V23L15 29 2 23V6Z" fill="#e8e8ea"/><path d="M15 12L28 6V23L15 29Z" fill="#c4c8d0"/><path d="M2 6L15 12 28 6M15 12V29M5 15L11 18M19 18L24 15M12 6H18" fill="none" stroke="#333" stroke-width="1.500"/></svg></span>
  </div>
  <div class="btns g3">
    <span class="ratio"><svg width="28" height="28"><use href="#scale"/></svg>1:1<svg class="t" width="12" height="9"><use href="#tri"/></svg></span>
    <span class="on"><svg width="28" height="28" viewBox="0 0 28 28"><use href="#scale"/><circle cx="19" cy="8" r="5" fill="none" stroke="#fff" stroke-width="1.500"/></svg></span>
    <span><svg width="28" height="28" viewBox="0 0 28 28"><use href="#scale"/><path d="M24 0L14 9H18L14 16 26 7H21Z" fill="#d8dae0" stroke="#444"/></svg></span>
  </div>
  <div class="btns g4"><span><svg width="27" height="22" viewBox="0 0 27 22"><rect width="27" height="22" fill="url(#gW)"/><path d="M3 8V3H8M19 3H24V8M3 14V19H8M24 14V19H19M3 3L10 9M24 3L17 9M3 19L10 13M24 19L17 13" fill="none" stroke="#333" stroke-width="1.600"/></svg></span></div>
  <i class="knob rise"><svg width="12" height="8" viewBox="0 0 12 8"><path d="M0 8L6 0 12 8Z" fill="#000"/></svg></i>
</footer>

<section class="command">
  <i class="knob"></i>
  <pre>Checking 1225 intersections...
Command: *Cancel*</pre>
  <div class="prompt"><span>Command:</span><svg class="t" width="16" height="11"><use href="#tri" width="16" height="11"/></svg><div class="field"></div></div>
  <i class="grip"></i>
  <i class="knob down"><svg width="12" height="8" viewBox="0 0 12 8"><path d="M0 0L6 8 12 0Z" fill="#000"/></svg></i>
  <svg class="corner" width="18" height="18" viewBox="0 0 18 18"><path d="M2 17L17 2M8 17L17 8" stroke="#888" stroke-width="2"/></svg>
</section>
<script src="canvas.js"></script>
</body>
</html>
```
FILE: styles.css
```css
* { box-sizing: border-box; }
body { margin: 0; width: 2880px; height: 1800px; overflow: hidden; position: relative; font: 500 23px "Noto Sans", "Noto Sans CJK JP", sans-serif; color: #fff; background: linear-gradient(#efc39b 46px, #f5dab2 220px, #fff9e6 548px, #f2c98e 680px, #fff0cb 840px, #eec78f 1100px, #f0b483 1400px, #54484a 1520px, #8b8890 1700px, #4a4a52 1800px); }
svg { flex: none; display: block; }
.defs { position: absolute; }
i { display: block; flex: none; }

.menubar { position: absolute; left: 0; top: 0; width: 2880px; height: 46px; border-bottom: 2px solid #8b6462; background: linear-gradient(90deg, #fbece1, #fde7e8 35%, #f6dfe1 60%, #eedde5 80%, #e6deeb); display: flex; align-items: center; padding: 0 46px 0 42px; font: 28px "Liberation Sans", sans-serif; color: #47352f; }
.apple { width: 26px; height: 33px; margin-top: -4px; }
.menus { display: grid; grid-template-columns: 239px 82px 88px 98px 110px 131px 105px 105px 175px 127px 178px 143px 148px 80px; margin-left: 39px; letter-spacing: .4px; white-space: nowrap; }
.menus b { letter-spacing: .7px; }
.tray { margin-left: auto; display: flex; align-items: center; color: #3a2a32; white-space: nowrap; }
.m37 { margin-left: 37px; } .m21 { margin-left: 21px; } .m26 { margin-left: 26px; } .m10 { margin-left: 10px; } .m32 { margin-left: 32px; } .m34 { margin-left: 34px; } .m31 { margin-left: 31px; }
.pct { width: 64px; font-size: 26px; } .date { width: 175px; letter-spacing: .6px; }
.ime { width: 32px; height: 32px; border-radius: 4px; background: #3a2a32; color: #f4e8ee; text-align: center; line-height: 32px; font-size: 25px; }

.rock { position: absolute; left: 144px; top: 46px; width: 14px; height: 1754px; background: linear-gradient(90deg, #0000, #0000 60%, #0003), linear-gradient(#d3aa94, #c99c74 500px, #a08a6c 900px, #bd8e74 1350px, #23232f 1358px, #353543); }

.drawing { position: absolute; left: 158px; top: 46px; width: 2222px; height: 1754px; background: #6b6b72; border-radius: 8px 8px 0 0; overflow: hidden; }
.titlebar { height: 44px; background: linear-gradient(#efefef, #d3d3d3); border-bottom: 2px solid #a9aba9; display: flex; align-items: center; gap: 16px; padding-left: 16px; }
.light { width: 24px; height: 24px; border-radius: 50%; }
.red { background: radial-gradient(circle, #5c0a06 4px, #fb5f59 5px); border: 1px solid #dd4a44; } .amber { background: #fdbc40; border: 1px solid #dfa034; } .light.green { background: #34c84a; border: 1px solid #27a935; }
.doc { flex: 1; display: flex; align-items: center; justify-content: center; gap: 12px; margin: 0 124px 0 -10px; color: #444; font: 27px "Liberation Sans", "Noto Sans CJK JP", sans-serif; line-height: 36px; }
.doc span { margin-top: 2px; }
.canvas { width: 2222px; height: 1643px; }
.compass { font: bold 50px "Liberation Sans", sans-serif; fill: #c6c6c8; stroke: #4d4d50; stroke-width: 2; paint-order: stroke; text-anchor: middle; }
.face { font: bold 31px Roboto, sans-serif; fill: #6b7076; text-anchor: middle; }
.wcs { font: 24px "Liberation Sans", sans-serif; fill: #70767a; }
.hud { font: 22px "Noto Sans", sans-serif; fill: #9b9b9d; }

.knob { width: 22px; height: 22px; border-radius: 50%; background: linear-gradient(#1c1c1e, #303032); border: 2px solid #000; box-shadow: 0 1px 1px #555; }
.t { color: #e0e0e0; }

.tools { position: absolute; left: 8px; top: 46px; width: 136px; height: 1754px; background: #242424; border: solid #000; border-width: 2px 2px 0; box-shadow: inset 2px 0 #2e2e2e, inset -2px 0 #2e2e2e; }
.tools-head { height: 37px; display: flex; justify-content: space-between; padding: 6px 10px 0 8px; background: linear-gradient(#686868, #262626 60%); }
.mode { height: 46px; background: linear-gradient(#93a0b8, #5f6e8a); border-block: 2px solid #111; display: flex; align-items: center; justify-content: space-between; padding: 0 17px 0 15px; }
.sets { padding: 0 4px; }
.sets section { position: relative; border-bottom: 2px solid #3c3c3c; padding: 10px 0 8px; }
.sets section > div { display: grid; grid-template-columns: 52px 52px; grid-auto-rows: 52px; place-items: center; padding-left: 3px; }
.sets div > svg { width: 31px; height: 31px; overflow: visible; }
.more { background: linear-gradient(90deg, transparent 108px, #2e2e2e 108px); }
.more::after { content: ""; position: absolute; right: 7px; top: 50%; margin-top: -5px; border: 6px solid transparent; border-left-color: #999; border-right: 0; }
.flyout::before, .sets section:nth-child(3)::after { content: ""; position: absolute; left: 44px; bottom: 12px; border-left: 8px solid transparent; border-bottom: 7px solid #999; }
.sets section:nth-child(3)::after { bottom: 116px; }
.arc::before { left: 96px; bottom: 64px; }

.panel { position: absolute; left: 2380px; width: 500px; background: #232323; border: 2px solid #000; }
.bar { height: 35px; display: flex; justify-content: space-between; align-items: center; padding: 2px 10px 0 8px; background: linear-gradient(#7a7a7a, #565656 2px, #232323 65%); font-size: 23px; }
.bar b { margin-top: -6px; }
.layers { top: 46px; height: 843px; }
.drop { display: flex; align-items: center; background: linear-gradient(#525252, #3d3d3d); border: 2px solid #121212; border-radius: 4px; box-shadow: 0 2px #2f2f2f, inset 0 2px #5a5a5a; font-size: 23px; line-height: 30px; }
.drop span { margin-top: -1px; }
.drop .t { margin-left: auto; }
.big { height: 51px; }
.current { width: 467px; margin: 9px 0 0 15px; padding: 0 16px 0 18px; }
.dot { width: 17px; height: 17px; border-radius: 50%; background: #d8d8d8; box-shadow: 0 1px 2px #000a; }
.dim { color: #2c2c2c; margin-left: 16px; } .dim + .dim { margin-left: 18px; }
.current .sw { margin-left: 15px; } .current span { margin-left: 25px; font-size: 24px; }
.sw { width: 18px; height: 18px; border: 2px solid #000; }
.gray { background: #c9d5db; } .black { background: #000; } .sw.green { background: #17641f; } .yellow { background: #ffff30; } .purple { background: #150430; }
.strip { display: grid; grid-template-columns: 55px 50px 50px 50px 52px 53px 50px 51px 1fr; width: 467px; height: 43px; margin: 9px 0 0 15px; border: 2px solid #121212; border-radius: 5px; background: linear-gradient(#474747, #363636 50%, #2c2c2c 50%, #303030); }
.strip span { display: flex; align-items: center; justify-content: center; border-right: 2px solid #2a2a2a; padding-right: 4px; } .strip span:last-child { border: 0; }
.state { width: 465px; margin: 13px 0 0 17px; padding: 0 8px 0 11px; letter-spacing: -.1px; } .state span { margin-top: -2px; }
.toggle { display: flex; align-items: center; gap: 12px; height: 30px; margin: 8px 0 0 18px; color: #9d9d9d; } .toggle b { margin-top: -2px; }
.table { margin: 15px 0 0 15px; width: 467px; height: 469px; }
.thead { height: 47px; display: grid; grid-template-columns: 49px 285px 44px 44px 1fr; border: 2px solid #000; background: linear-gradient(#484848, #5a5a5a 90%, #484848); }
.thead > span { display: flex; align-items: center; justify-content: center; border-right: 2px solid #303030; padding-bottom: 2px; } .thead > span:last-child { border: 0; }
.thead .name { justify-content: flex-start; padding-left: 10px; position: relative; background: linear-gradient(#4b4e55, #4d638d); color: #ddd; }
.name b { margin: -2px 0 0 13px; } .sort { margin-left: auto; margin-right: 12px; } .notch { position: absolute; left: 134px; bottom: 0; }
.lrow { height: 38px; display: flex; align-items: center; padding: 0 0 1px 14px; margin: 0 2px; line-height: 30px; } .lrow .sw { margin: 0 18px 0 27px; } .lrow span { margin-top: -3px; letter-spacing: -.1px; }
.lrow .ja { font-size: 22px; }
.lrow.on { background: linear-gradient(#a8a8a8, #868686); color: #000; } .on .dot { background: #eee; }
.foot { grid-template-columns: 62px 58px 58px 160px 60px 1fr; margin-top: -1px; } .foot .t { margin-left: 7px; color: #fff; } .foot span:last-child { padding-right: 0; }
.minus { width: 16px; height: 4px; background: #777; }
.search { width: 464px; height: 40px; margin: 6px 0 0 16px; border-radius: 5px; background: #fff; color: #bbb; display: flex; align-items: center; justify-content: center; gap: 11px; font: 26px "Liberation Sans", sans-serif; padding-right: 32px; letter-spacing: .6px; }

.props { top: 889px; height: 845px; }
.tabs { height: 50px; display: flex; margin-top: 1px; border-top: 2px solid #333; border-bottom: 2px solid #4a4a4a; background: #272727; }
.tab { width: 80px; margin: 0 0 -2px 10px; border: solid #474747; border-width: 0 2px; background: linear-gradient(#3c3c3c, #232323); display: flex; align-items: center; justify-content: center; }
.tab2 { width: 84px; display: flex; align-items: center; justify-content: center; }
.filter { height: 66px; display: flex; align-items: center; padding: 0 23px 9px 131px; }
.seg { display: flex; width: 229px; height: 33px; border: 2px solid #111; border-radius: 17px; overflow: hidden; background: linear-gradient(#434343, #303030); font-size: 23px; line-height: 25px; } .seg b { flex: 1; text-align: center; font-weight: 500; } .seg .on { flex: 0 0 146px; padding-right: 6px; background: linear-gradient(#48505f, #3a4558); }
.round { width: 45px; height: 33px; border: 2px solid #111; border-radius: 17px; margin-left: 18px; display: flex; align-items: center; justify-content: center; background: linear-gradient(#434343, #2c2c2c); } .round + .round { margin-left: 5px; }
.rows { position: relative; height: 675px; overflow: hidden; }
.row { height: 46px; display: flex; align-items: center; }
.row label { width: 265px; text-align: right; color: #a3a3a3; font-weight: 700; font-size: 22px; letter-spacing: .3px; margin-right: 18px; margin-top: -2px; white-space: nowrap; } .row .cut { width: 259px; margin-right: 24px; }
.row .drop { width: 164px; height: 37px; padding: 0 7px 0 11px; font-size: 22px; }
.col span { margin-left: auto; } .col .t { margin-left: 9px; } .col .sw { margin-left: 6px; }
.ln { width: 64px; height: 2px; background: #fff; margin-left: 3px; } .ln.wide { width: 72px; margin-left: -1px; } .ln + span { margin-left: auto; } .ln + span + .t { margin-left: 10px; }
.row .input { padding-left: 6px; background: linear-gradient(#3b3b3b, #4b4b4b); box-shadow: 0 2px #333; font-size: 23px; letter-spacing: .3px; } .input span { margin-top: 1px; }
.row .short { width: 119px; } .row .pick { width: 38px; margin-left: 5px; padding: 0 3px; }
.row .off { background: #2e2e2e; color: #6f6f6f; border-color: #242424; font-size: 22px; }
.slider { width: 74px; height: 33px; margin-left: 5px; border: 2px solid #111; background: #424242; display: flex; justify-content: flex-end; align-items: center; padding-right: 4px; position: relative; } .slider::before { content: ""; position: absolute; left: -1px; top: 1px; width: 3px; height: 27px; background: linear-gradient(#5d94e8 5px, #111 5px 22px, #5d94e8 22px); } .slider i { width: 2px; height: 11px; background: #5d94e8; margin: 12px 17px 0 0; } .slider span { font-size: 22px; }
.row .lay { width: 78px; margin-left: 7px; padding-left: 12px; }
.thumb { position: absolute; right: 22px; top: 7px; width: 10px; height: 604px; border-radius: 5px; background: #777; }

.status { position: absolute; left: 1900px; top: 1736px; width: 980px; height: 64px; background: #232323; border: solid #000; border-width: 2px 2px 2px 0; display: flex; align-items: flex-start; padding: 7px 0 0 1px; }
.btns { flex: none; display: flex; height: 49px; border: 2px solid #111; } .btns span { width: 50px; display: flex; align-items: center; justify-content: center; background: linear-gradient(#4c4c4c, #373737); border-right: 2px solid #141414; font-size: 24px; } .btns span:last-child { border: 0; width: 48px; } .btns .on { background: linear-gradient(#2f435f, #39506f); }
.g2 { margin-left: 49px; } .g3 { margin-left: 34px; } .g3 .ratio { width: 111px; gap: 9px; } .g4 { margin-left: 14px; }
.status .knob { width: 28px; height: 28px; margin: 6px 0 0 18px; } .rise, .down { display: flex; align-items: center; justify-content: center; } .status .rise { background: linear-gradient(#555, #333); }

.command { position: absolute; left: 8px; top: 1646px; width: 1916px; height: 152px; border: 2px solid #111; border-radius: 12px; background: linear-gradient(90deg, #6a6a6a, #262626 17px); box-shadow: inset 0 2px #363636; }
.command > .knob { position: absolute; left: 4px; top: 6px; }
.command pre { margin: 6px 0 0 50px; font: 22px/27.500px "DejaVu Sans Mono", monospace; color: #ababab; height: 91px; }
.prompt { display: flex; align-items: center; margin-left: 179px; } .prompt span { width: 122px; font-size: 23px; margin-top: -3px; } .prompt .t { color: #4b4b4b; margin: 0 17px 0 8px; }
.field { width: 1519px; height: 38px; border: 2px solid #141414; background: linear-gradient(#5a5a5a, #494949); }
.grip { position: absolute; left: 1878px; top: 48px; width: 10px; height: 36px; border-radius: 5px; background: #7d7d7d; }
.command > .down { left: 1870px; top: 102px; width: 27px; height: 27px; background: linear-gradient(#555, #333); }
.corner { position: absolute; right: 2px; bottom: 2px; }
```
FILE: canvas.js
```js
const NS = "http://www.w3.org/2000/svg";
const add = (id, tag, attrs) => {
  const el = document.createElementNS(NS, tag);
  for (const k in attrs) el.setAttribute(k, attrs[k]);
  document.getElementById(id).appendChild(el);
};

// Construction grid; every fifth line is a major one, counted from the origin.
const step = 41.37, ox = 1714, oy = 1405;
const tone = i => (i % 5 === 0 ? "#56566a" : "#616169");
for (let i = -37; i <= 16; i++) {
  add("grid", "rect", { x: Math.round(ox + i * step), y: 90, width: 1, height: 1643, fill: tone(i) });
}
for (let j = -31; j <= 7; j++) {
  add("grid", "rect", { x: 158, y: Math.round(oy + j * step), width: 2222, height: 1, fill: tone(j) });
}

// Breadboard holes: the far rim is displaced by perspective.
for (let r = 0; r < 12; r++) {
  for (let c = 0; c < 12; c++) {
    const cx = 757 + c * 83.7, cy = 450 + r * 83.6;
    const bx = cx + 0.5 + (1270 - cx) * 0.0125, by = cy + (850 - cy) * 0.0125;
    add("rims", "circle", { cx, cy, r: 9.8 });
    add("holeTop", "circle", { cx, cy, r: 9.6 });
    add("holeBottom", "circle", { cx: bx, cy: by, r: 9.4 });
  }
}
```
